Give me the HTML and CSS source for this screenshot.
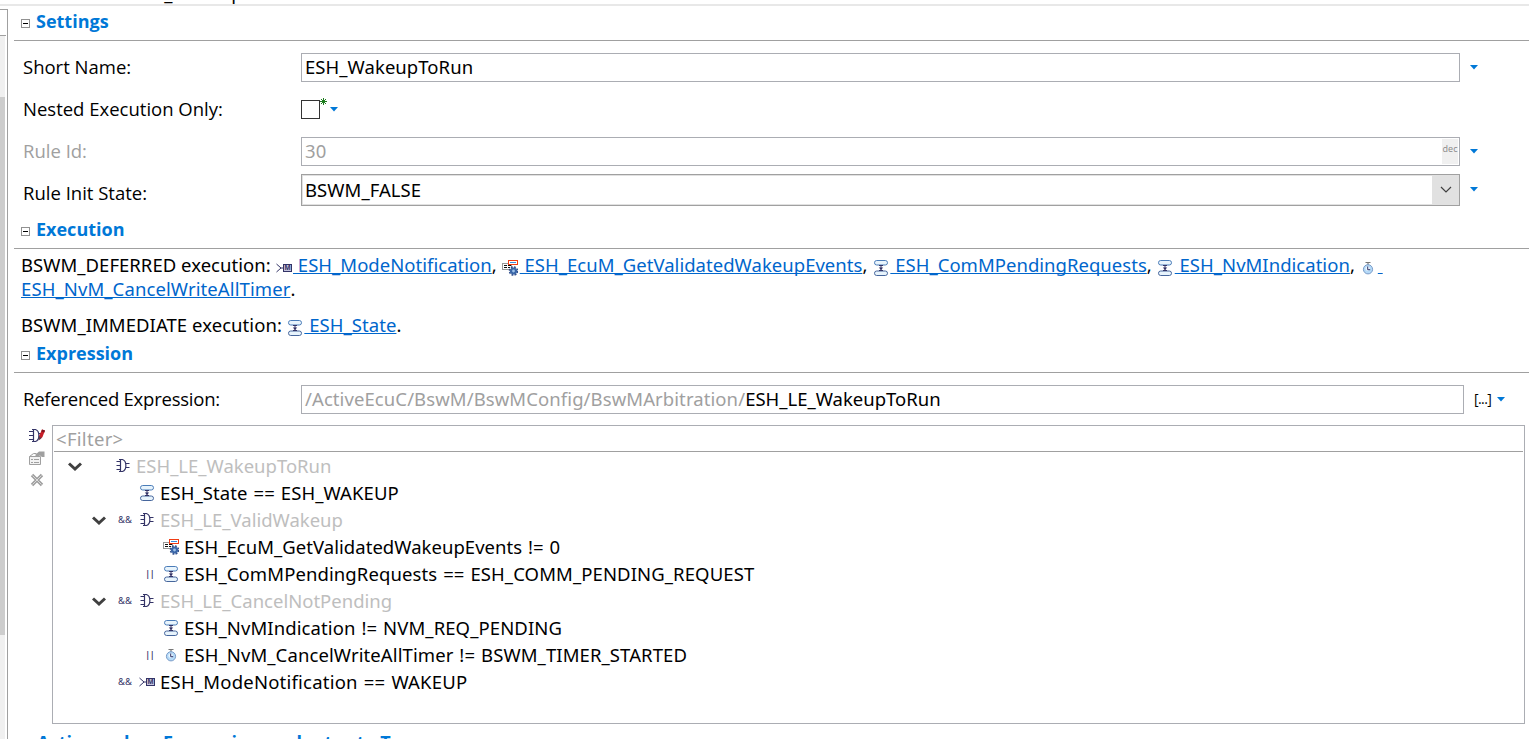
FILE: index.html
```html
<!DOCTYPE html>
<html lang="en">
<head>
<meta charset="UTF-8">
<meta name="viewport" content="width=device-width, initial-scale=1.0">
<title>ESH_WakeupToRun</title>
<link rel="stylesheet" href="styles.css">
</head>
<body>
<!-- Shared icons -->
<svg class="defs" xmlns="http://www.w3.org/2000/svg">
    <symbol id="mode" viewBox="0 0 16 16">
        <path d="M.5 4L5 8L.5 12M5 8H7.5" fill="none" stroke="#333366"/>
        <rect x="7.5" y="4.5" width="8" height="7" fill="#c4c4de" stroke="#333366"/>
        <text x="11.5" y="10.4" font-size="6.5" font-weight="bold" text-anchor="middle" fill="#333366">M</text>
    </symbol>
    <symbol id="state" viewBox="0 0 16 16">
        <rect x="1.5" y=".5" width="13" height="4.5" rx="2.2" fill="#e8f4fc" stroke="#4a7cb8"/>
        <rect x="1.5" y="11" width="13" height="4.5" rx="2.2" fill="#e8f4fc" stroke="#46669c"/>
        <path d="M6 5.5h4M8 5.5v5M6 10.5h4" fill="none" stroke="#333366"/>
        <path d="M5.8 7.5h4.4L8 10z" fill="#333366"/>
    </symbol>
    <symbol id="ecu" viewBox="0 0 16 16">
        <rect x=".5" y="3.5" width="9" height="6" fill="#fff" stroke="#999"/>
        <path d="M2 5.5h3M6 5.5h3M2 7.5h3M6 7.5h2" stroke="#111"/>
        <rect x="6.5" y=".5" width="9" height="4" fill="#fff" stroke="#f03c14"/>
        <path d="M8 2.5h6" stroke="#3c8cdc"/>
        <circle cx="11.5" cy="11" r="4" fill="none" stroke="#33508c" stroke-width="1.6" stroke-dasharray="1.9 1.24"/>
        <circle cx="11.5" cy="11" r="2.5" fill="#9fc3ea" stroke="#3a66a8" stroke-width="2.2"/>
    </symbol>
    <symbol id="timer" viewBox="0 0 16 16">
        <path d="M5.5 2.5h5M8 3v2" stroke="#777" stroke-width="1.2"/>
        <circle cx="8" cy="9.3" r="4.6" fill="#b5daf8" stroke="#7a9cc8"/>
        <circle cx="7.6" cy="8.6" r="2.2" fill="#eaf6ff"/>
        <path d="M7.7 6.5v3.2h2.5" fill="none" stroke="#333366"/>
    </symbol>
    <symbol id="gate" viewBox="0 0 16 16">
        <path d="M1.5 3.5h4M1.5 7.5h4M1.5 11.5h4M5.5 1.5v12M4 1.5H7.5c4.500 1.500 4.500 10.500 0 12H4M11 5.500h3.500M11 9.500h3.500" fill="none" stroke="#333366" stroke-width="1.2"/>
    </symbol>
    <symbol id="edit" viewBox="0 0 16 16">
        <path d="M0 3.500h4M0 7.500h4M0 11.500h4M4.500 1.500v12M3 1.500H6.500c4.500 1.500 4.500 10.500 0 12H3M9.500 5.500h3M9.500 9.500h3" fill="none" stroke="#333366" stroke-width="1.2"/>
        <path d="M10 8L13 1.500l3 1L13.500 9l-3 3z" fill="#c81e28"/>
        <path d="M13 1.500l3 1-.7 2-3-1z" fill="#7d1420"/>
        <path d="M10 8l-.5 4.500 3-2.500z" fill="#5a3a4a"/>
    </symbol>
    <symbol id="props" viewBox="0 0 16 16">
        <path d="M.5 6.500L4.500 3.500h3M.5 6.500h11v8H.5z" fill="#f2f2f2" stroke="#a0a0a0"/>
        <path d="M2 9.500h2M5 9.500h5M2 12.500h2M5 12.500h5" stroke="#a0a0a0"/>
        <path d="M6 5l4-3.500h5.500V7H13L11 5.500 8 7z" fill="#a0a0a0"/>
    </symbol>
    <symbol id="delete" viewBox="0 0 16 16">
        <path d="M3 3l10 10M13 3L3 13" stroke="#a0a0a0" stroke-width="3.4"/>
        <path d="M3.500 3.500l9 9M12.500 3.500l-9 9" stroke="#d8d8d8"/>
    </symbol>
    <symbol id="chevron" viewBox="0 0 14 10">
        <path d="M1 1.500l6 5.500 6-5.500" fill="none" stroke="#404040" stroke-width="3"/>
    </symbol>
    <symbol id="arrow" viewBox="0 0 8 5">
        <path d="M0 0h8L4 4.600z" fill="#0078d7"/>
    </symbol>
    <symbol id="minus" viewBox="0 0 9 9">
        <rect x=".5" y=".5" width="8" height="8" fill="#fff" stroke="#919191"/>
        <path d="M2 4.500h5" stroke="#000"/>
    </symbol>
</svg>

<div class="topbar"><span>ESH_WakeupToRun</span></div>

<div class="page">
    <div class="side">
        <div class="side-head"></div>
        <div class="scrollbar"><div class="thumb"></div></div>
    </div>

    <div class="main">
        <h2 class="first"><svg class="minus"><use href="#minus"/></svg>Settings</h2>
        <div class="row">
            <label>Short Name:</label>
            <div class="field">ESH_WakeupToRun</div>
            <svg class="arrow"><use href="#arrow"/></svg>
        </div>
        <div class="row">
            <label>Nested Execution Only:</label>
            <div class="check"></div>
            <svg class="star" viewBox="0 0 7 7"><path d="M3.5 0v7M0 3.5h7M1 1l5 5M6 1L1 6" stroke="#1e7d1e"/></svg>
            <svg class="arrow check-arrow"><use href="#arrow"/></svg>
        </div>
        <div class="row">
            <label class="disabled">Rule Id:</label>
            <div class="field disabled">30<span class="dec">dec</span></div>
            <svg class="arrow"><use href="#arrow"/></svg>
        </div>
        <div class="row combo-row">
            <label>Rule Init State:</label>
            <div class="field combo">BSWM_FALSE
                <span class="drop"><svg width="12" height="8" viewBox="0 0 12 8"><path d="M1 1l5 5 5-5" fill="none" stroke="#404040" stroke-width="1.2"/></svg></span>
            </div>
            <svg class="arrow"><use href="#arrow"/></svg>
        </div>

        <h2><svg class="minus"><use href="#minus"/></svg>Execution</h2>
        <p>BSWM_DEFERRED execution: <svg class="icon"><use href="#mode"/></svg><a>&nbsp;ESH_ModeNotification</a>, <svg class="icon"><use href="#ecu"/></svg><a>&nbsp;ESH_EcuM_GetValidatedWakeupEvents</a>, <svg class="icon"><use href="#state"/></svg><a>&nbsp;ESH_ComMPendingRequests</a>, <svg class="icon"><use href="#state"/></svg><a>&nbsp;ESH_NvMIndication</a>, <svg class="icon"><use href="#timer"/></svg><a class="wide">&nbsp;<br>ESH_NvM_CancelWriteAllTimer</a>.</p>
        <p class="immediate">BSWM_IMMEDIATE execution: <svg class="icon"><use href="#state"/></svg><a>&nbsp;ESH_State</a>.</p>

        <h2 class="expression"><svg class="minus"><use href="#minus"/></svg>Expression</h2>
        <div class="row ref-row">
            <label>Referenced Expression:</label>
            <div class="field"><span class="path">/ActiveEcuC/BswM/BswMConfig/BswMArbitration/</span>ESH_LE_WakeupToRun</div>
            <span class="browse">[...]</span>
            <svg class="arrow"><use href="#arrow"/></svg>
        </div>

        <div class="expr">
            <div class="tools">
                <svg class="icon"><use href="#edit"/></svg>
                <svg class="icon"><use href="#props"/></svg>
                <svg class="icon"><use href="#delete"/></svg>
            </div>
            <div class="tree">
                <div class="filter">&lt;Filter&gt;</div>
                <div class="node">
                    <span class="toggle"><svg class="chevron"><use href="#chevron"/></svg></span><span class="op"></span>
                    <svg class="icon"><use href="#gate"/></svg><span class="gray">ESH_LE_WakeupToRun</span>
                </div>
                <div class="node l1">
                    <span class="toggle"></span><span class="op"></span>
                    <svg class="icon"><use href="#state"/></svg><span>ESH_State == ESH_WAKEUP</span>
                </div>
                <div class="node l1">
                    <span class="toggle"><svg class="chevron"><use href="#chevron"/></svg></span><span class="op">&amp;&amp;</span>
                    <svg class="icon"><use href="#gate"/></svg><span class="gray">ESH_LE_ValidWakeup</span>
                </div>
                <div class="node l2">
                    <span class="toggle"></span><span class="op"></span>
                    <svg class="icon"><use href="#ecu"/></svg><span class="tight">ESH_EcuM_GetValidatedWakeupEvents != 0</span>
                </div>
                <div class="node l2">
                    <span class="toggle"></span><span class="op or">||</span>
                    <svg class="icon"><use href="#state"/></svg><span>ESH_ComMPendingRequests == ESH_COMM_PENDING_REQUEST</span>
                </div>
                <div class="node l1">
                    <span class="toggle"><svg class="chevron"><use href="#chevron"/></svg></span><span class="op">&amp;&amp;</span>
                    <svg class="icon"><use href="#gate"/></svg><span class="gray">ESH_LE_CancelNotPending</span>
                </div>
                <div class="node l2">
                    <span class="toggle"></span><span class="op"></span>
                    <svg class="icon"><use href="#state"/></svg><span>ESH_NvMIndication != NVM_REQ_PENDING</span>
                </div>
                <div class="node l2">
                    <span class="toggle"></span><span class="op or">||</span>
                    <svg class="icon"><use href="#timer"/></svg><span>ESH_NvM_CancelWriteAllTimer != BSWM_TIMER_STARTED</span>
                </div>
                <div class="node l1">
                    <span class="toggle"></span><span class="op">&amp;&amp;</span>
                    <svg class="icon"><use href="#mode"/></svg><span class="wide">ESH_ModeNotification == WAKEUP</span>
                </div>
            </div>
        </div>

        <h2 class="last">Actions when Expression evaluates to True</h2>
    </div>
</div>
</body>
</html>
```
FILE: styles.css
```css
* {
    box-sizing: border-box;
}

body {
    margin: 0;
    height: 739px;
    overflow: hidden;
    background: #fff;
    color: #000;
    font: 18.5px/24px "Noto Sans", "Open Sans", sans-serif;
}

.defs {
    display: none;
}

/* Bottom edge of the title bar */
.topbar {
    display: flex;
    align-items: flex-end;
    height: 6px;
    padding-left: 130px;
    overflow: hidden;
    border-bottom: 2px solid #e8e8e8;
}

.topbar span {
    line-height: 22px;
}

.page {
    display: flex;
    height: 733px;
}

/* Left panel with its scrollbar */
.side {
    display: flex;
    flex-direction: column;
    flex: none;
    width: 8px;
    margin: 3px 6px 0 0;
    border-top: 1px solid #a0a0a0;
    border-right: 1px solid #a0a0a0;
}

.side-head {
    height: 26px;
    width: 6px;
    border-bottom: 1px solid #a0a0a0;
}

.scrollbar {
    flex: 1;
    width: 5px;
    padding-top: 61px;
    background: #f0f0f0;
}

.thumb {
    height: 538px;
    background: #cdcdcd;
}

.main {
    flex: 1;
    min-width: 0;
}

h2 {
    display: flex;
    align-items: center;
    height: 32px;
    margin: 11px 0 0;
    padding: 0 0 7px 7px;
    border-bottom: 1px solid #a0a0a0;
    color: #0078d7;
    font: bold 18px/24px "Open Sans", sans-serif;
}

h2.first {
    margin: 3px 0 12px;
}

h2.expression {
    margin: 4px 0 12px;
}

h2.last {
    margin-top: 5px;
    padding-left: 23px;
    border: 0;
    white-space: nowrap;
}

.minus {
    width: 9px;
    height: 9px;
    margin: 4px 6px 0 0;
}

/* Form rows */
.row {
    display: flex;
    align-items: center;
    height: 29px;
    margin-bottom: 13px;
    padding-left: 9px;
}

label {
    flex: none;
    width: 278px;
    padding-bottom: 2px;
    font-family: "Open Sans", sans-serif;
}

.field {
    display: flex;
    align-items: center;
    width: 1159px;
    height: 29px;
    padding: 0 0 2px 3px;
    border: 1px solid #abadb3;
    letter-spacing: 0.06px;
    white-space: nowrap;
}

.disabled {
    color: #a0a0a0;
}

.arrow {
    width: 8px;
    height: 5px;
    margin-left: 9.5px;
}

.check {
    width: 19px;
    height: 19px;
    border: 1px solid #333;
}

.star {
    width: 7px;
    height: 7px;
    margin-top: -16px;
}

.check-arrow {
    margin-left: 2.5px;
}

.dec {
    width: 16px;
    height: 25px;
    margin: 2px 1px 0 auto;
    background: #f0f0f0;
    color: #888;
    font: 9px/20px "Open Sans", sans-serif;
    text-align: center;
}

.row:has(.dec) {
    margin-bottom: 8px;
}

.combo-row {
    height: 32px;
    margin-bottom: 0;
}

.combo-row label {
    padding: 6px 0 0;
}

.combo {
    height: 32px;
    padding-bottom: 0;
    border-color: #a0a0a0;
    box-shadow: inset 0 0 0 1px #e1e1e1;
}

.drop {
    display: flex;
    align-items: center;
    justify-content: center;
    width: 27px;
    height: 30px;
    margin-left: auto;
    background: #e1e1e1;
}

.combo-row .arrow {
    margin-bottom: 1px;
}

p {
    margin: 0 0 12px;
    padding-left: 7px;
    letter-spacing: 0.03px;
    white-space: nowrap;
}

h2 + p {
    padding-top: 4px;
}

p.immediate {
    letter-spacing: 0.06px;
}

p + h2.expression {
    margin-top: -8px;
}

a {
    color: #0066cc;
    text-decoration: underline;
    text-decoration-skip-ink: none;
    text-decoration-thickness: 1px;
    text-underline-offset: 1px;
}

a.wide {
    letter-spacing: 0.1px;
}

.icon {
    flex: none;
    width: 16px;
    height: 16px;
}

p .icon {
    margin-right: 1.5px;
    vertical-align: -4px;
}

p a + .icon {
    margin-left: 0.6px;
}

/* Referenced expression */
.ref-row {
    margin-bottom: 11px;
}

.ref-row label {
    letter-spacing: -0.23px;
}

.ref-row .field {
    width: 1163px;
    letter-spacing: 0;
}

.path {
    color: #a0a0a0;
    letter-spacing: 0.09px;
}

.browse {
    width: 17px;
    margin-left: 10px;
    padding-bottom: 2px;
    font: 14px/20px "Open Sans", sans-serif;
    letter-spacing: -0.6px;
}

.ref-row .arrow {
    margin-left: 5.5px;
}

.expr {
    display: flex;
}

.tools {
    display: flex;
    flex-direction: column;
    gap: 6px;
    width: 38px;
    padding: 3px 0 0 15px;
}

.tree {
    width: 1473px;
    height: 299px;
    border: 1px solid #abadb3;
}

.filter {
    height: 26px;
    margin: 0 1px;
    padding: 1px 0 0 2px;
    border-bottom: 1px solid #a0a0a0;
    color: #a0a0a0;
    letter-spacing: 0.3px;
}

.node {
    display: flex;
    align-items: center;
    height: 27px;
    padding-left: 9px;
    letter-spacing: 0.1px;
    word-spacing: 1px;
    white-space: nowrap;
}

.l1 {
    padding-left: 33px;
}

.l2 {
    padding-left: 57px;
}

.toggle {
    display: flex;
    justify-content: center;
    width: 25px;
}

.chevron {
    width: 14px;
    height: 10px;
    margin-top: 2px;
}

.op {
    width: 28px;
    color: #333366;
    font-size: 9.5px;
    letter-spacing: 0;
    text-align: center;
}

.or {
    padding-left: 2px;
    font-size: 8px;
    font-weight: bold;
}

.node .icon {
    margin-right: 5px;
}

.node .gray {
    color: #bebebe;
    letter-spacing: 0;
}

.node .tight {
    letter-spacing: 0.04px;
}

.node .wide {
    letter-spacing: 0.22px;
}
```
